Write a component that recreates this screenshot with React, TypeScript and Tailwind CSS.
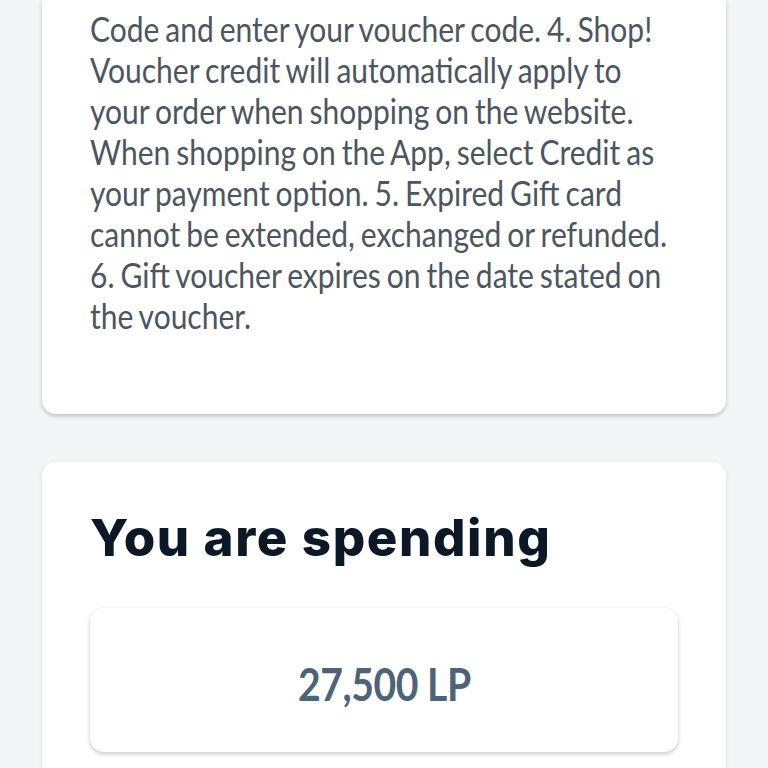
export default function App() {
  return (
    <div className="h-[768px] w-[768px] overflow-hidden bg-[#f4f5f7]">
      <div className="flex flex-col gap-12 px-[42px]">
        <div className="rounded-b-[14px] bg-white px-12 pb-[78px] pt-[8px] shadow-[0_2px_4px_rgba(0,0,0,0.22)]">
          {/* the screenshot text is horizontally condensed */}
          <p className="w-[685px] origin-left scale-x-[0.857] text-[35px] leading-[41px] text-[#4b5660] [word-spacing:-2px] [font-family:Lato,'Liberation_Sans',sans-serif]">
            Code and enter your voucher code. 4. Shop! Voucher credit will automatically apply to
            your order when shopping on the website. When shopping on the App, select Credit as
            your payment option. 5. Expired Gift card cannot be extended, exchanged or refunded.
            6. Gift voucher expires on the date stated on the voucher.
          </p>
        </div>

        <div className="rounded-[14px] bg-white px-12 pt-[44px] pb-8 shadow-[0_2px_4px_rgba(0,0,0,0.12)]">
          <h2 className="text-[51px] font-extrabold leading-[64px] tracking-[1.6px] text-[#0b1926] [font-family:Inter,'Liberation_Sans',sans-serif]">
            You are spending
          </h2>
          <div className="mt-[38px] flex h-[144px] items-center justify-center rounded-[14px] bg-white pt-[10px] shadow-[0_2px_4px_rgba(0,0,0,0.22)]">
            <span className="inline-block scale-x-[0.87] text-[45px] font-bold tracking-[-0.5px] text-[#4d6478] [font-family:Lato,'Liberation_Sans',sans-serif]">
              27,500 LP
            </span>
          </div>
        </div>
      </div>
    </div>
  );
}
